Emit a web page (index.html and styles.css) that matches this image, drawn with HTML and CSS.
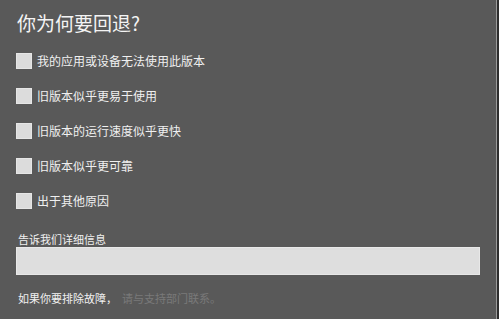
FILE: index.html
```html
<!DOCTYPE html>
<html lang="zh-CN">
<head>
<meta charset="utf-8">
<link rel="stylesheet" href="styles.css">
</head>
<body>
<div class="frame">
  <div class="panel">
    <h1 class="title">你为何要回退?</h1>
    <ul class="options">
      <li class="option"><span class="box"></span><span class="opt-text">我的应用或设备无法使用此版本</span></li>
      <li class="option"><span class="box"></span><span class="opt-text">旧版本似乎更易于使用</span></li>
      <li class="option"><span class="box"></span><span class="opt-text">旧版本的运行速度似乎更快</span></li>
      <li class="option"><span class="box"></span><span class="opt-text">旧版本似乎更可靠</span></li>
      <li class="option"><span class="box"></span><span class="opt-text">出于其他原因</span></li>
    </ul>
    <div class="label">告诉我们详细信息</div>
    <div class="input"></div>
    <p class="footer">如果你要排除故障，<span class="link">请与支持部门联系。</span></p>
  </div>
</div>
</body>
</html>
```
FILE: styles.css
```css
html, body {
  margin: 0;
  padding: 0;
}
body {
  width: 499px;
  height: 319px;
  background: #595959;
  font-family: "Microsoft YaHei", "Noto Sans CJK SC", "Noto Sans", sans-serif;
  overflow: hidden;
}
.frame {
  box-sizing: border-box;
  width: 499px;
  height: 319px;
  border-right: 2px solid #2e2e2e;
}
.panel {
  box-sizing: border-box;
  height: 100%;
  border-right: 1px solid #9a9a9a;
  padding: 10px 0 0 16px;
}
.title {
  margin: 0;
  padding-left: 1px;
  font-size: 19px;
  line-height: 26px;
  font-weight: normal;
  color: #f4f4f4;
}
.options {
  list-style: none;
  margin: 7px 0 0 0;
  padding: 0;
}
.option {
  display: flex;
  align-items: center;
  height: 35px;
}
.box {
  box-sizing: border-box;
  width: 16px;
  height: 16px;
  background: #dcdcdc;
  border: 1px solid #e6e6e6;
  flex: none;
}
.opt-text {
  margin-left: 5px;
  font-size: 12px;
  line-height: 16px;
  color: #f0f0f0;
}
.label {
  margin-top: 14px;
  padding-left: 2px;
  font-size: 11px;
  line-height: 15px;
  color: #f0f0f0;
}
.input {
  box-sizing: border-box;
  width: 464px;
  height: 28px;
  background: #dedede;
  border: 1px solid #e8e8e8;
}
.footer {
  margin: 15px 0 0 0;
  padding-left: 2px;
  font-size: 11px;
  line-height: 16px;
  color: #f0f0f0;
}
.link {
  margin-left: 5px;
  color: #7a7a7a;
}
```
